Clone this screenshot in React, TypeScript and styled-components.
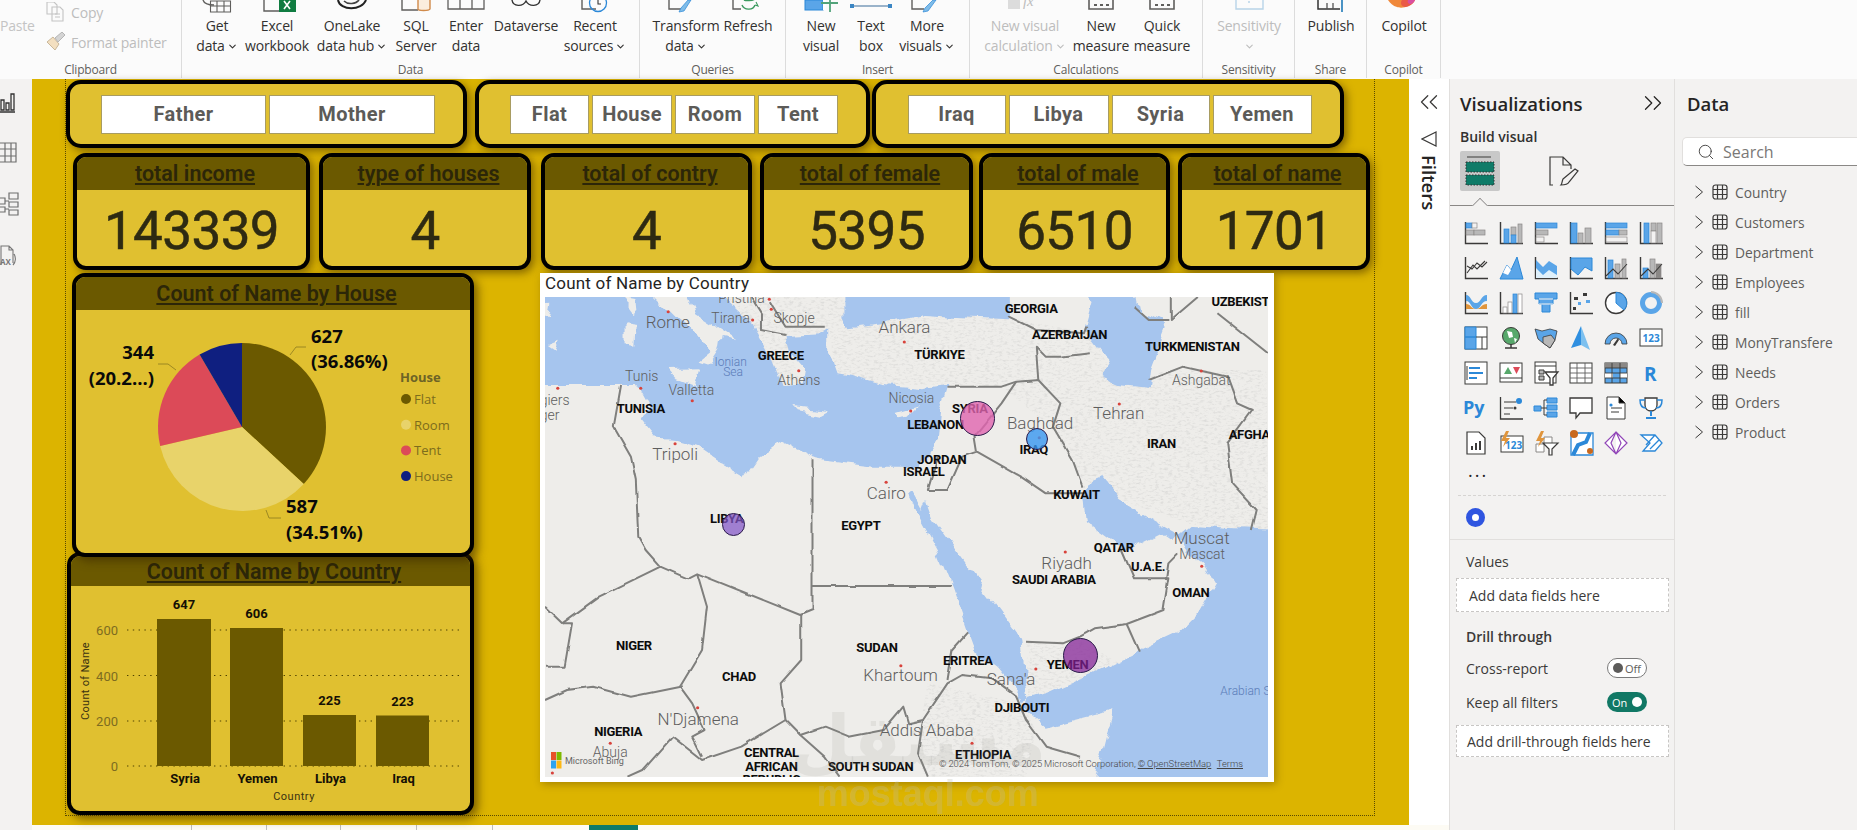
import React, { FC, ReactNode } from 'react';
import styled, { createGlobalStyle } from 'styled-components';
import { ChevronDown, ChevronsLeft, ChevronsRight, Search } from 'lucide-react';

const UI = '"Open Sans", "Noto Sans", sans-serif';
const DIN = 'Roboto, "Liberation Sans", sans-serif';

const GlobalStyle = createGlobalStyle`
  * { box-sizing: border-box; }
  html, body { margin: 0; padding: 0; background: #fff; overflow: hidden; }
  body { font-family: ${UI}; color: #252423; }
`;

/* ---------- ribbon ---------- */

const Ribbon = styled.div`
  display: flex;
  height: 79px;
  background: #fbfbfb;
`;
const Group = styled.div<{ $w: number }>`
  width: ${p => p.$w}px;
  height: 78px;
  display: flex;
  flex-direction: column;
  border-right: 1px solid #dcdcdc;
`;
const GroupItems = styled.div<{ $pad?: number }>`
  display: flex;
  height: 62px;
  flex: none;
  padding-left: ${p => p.$pad ?? 0}px;
`;
const GroupLabel = styled.div`
  height: 16px;
  line-height: 16px;
  text-align: center;
  font-size: 12px;
  letter-spacing: -0.2px;
  color: #605e5c;
`;
const RibbonBtn = styled.div<{ $w: number; $off?: boolean }>`
  width: ${p => p.$w}px;
  flex: none;
  display: flex;
  flex-direction: column;
  align-items: center;
  font-size: 14px;
  letter-spacing: -0.15px;
  line-height: 20px;
  white-space: nowrap;
  color: ${p => (p.$off ? '#bdbdbd' : '#323130')};
`;
const IconSlot = styled.div`
  height: 16px;
  width: 44px;
  flex: none;
  svg { display: block; }
`;
const Line = styled.div`
  display: flex;
  align-items: center;
  height: 20px;
  gap: 2px;
`;
const ClipPaste = styled.div`
  width: 46px;
  padding-top: 16px;
  font-size: 14px;
  line-height: 20px;
  letter-spacing: -0.2px;
  color: #c4c4c4;
`;
const ClipRows = styled.div`
  display: flex;
  flex-direction: column;
  gap: 10px;
  padding-top: 2px;
`;
const ClipRow = styled.div`
  display: flex;
  align-items: center;
  gap: 5px;
  height: 20px;
  font-size: 14px;
  letter-spacing: -0.15px;
  color: #bdbdbd;
`;

const Ico: FC<{ children: ReactNode }> = ({ children }) => (
  <IconSlot>
    <svg width="44" height="16" viewBox="0 0 44 16" fill="none">{children}</svg>
  </IconSlot>
);

const Btn: FC<{ w: number; icon?: ReactNode; a: string; b?: string; chev?: boolean; off?: boolean }> = ({ w, icon, a, b, chev, off }) => (
  <RibbonBtn $w={w} $off={off}>
    <Ico>{icon}</Ico>
    <Line>{a}</Line>
    <Line>{b}{chev && <ChevronDown size={11} strokeWidth={2.4} />}</Line>
  </RibbonBtn>
);

const GR = '#5f5e5c';
function FxText({ x, y, children }: { x: string; y: string; children: string }) {
  return <text x={x} y={y} fontFamily='"Liberation Serif", serif' fontStyle="italic" fontSize="15" fill="#bdbdbd">{children}</text>;
}
const ribbonIcons = {
  getData: <g>
    <path d="M8 0c1 3 4 5 11 5" stroke={GR} strokeWidth="1.4" />
    <path d="M15.5 1h20v11h-20zM22 1v11M29 1v11M15.5 6h20" stroke={GR} strokeWidth="1.1" /></g>,
  excel: <g>
    <path d="M9 0v11h15" stroke={GR} strokeWidth="1.4" />
    <rect x="24" y="0" width="17" height="12" fill="#107c41" />
    <path d="M29 1l6 8M35 1l-6 8" stroke="#fff" strokeWidth="1.6" /></g>,
  onelake: <g>
    <path d="M8 0c2 11 24 11 28 0" stroke="#222" strokeWidth="2" />
    <path d="M14 1c4 4 12 3 15-1" stroke="#444" strokeWidth="1.6" /></g>,
  sql: <g>
    <path d="M8 0v10h16" stroke={GR} strokeWidth="1.4" />
    <path d="M24 0v9c0 2 11 2 12 0V0" stroke="#d08a4a" strokeWidth="1.4" fill="#fbeede" /></g>,
  table: <g>
    <path d="M4 0v9h36V0M16 0v9M28 0v9" stroke={GR} strokeWidth="1.3" /></g>,
  dataverse: <g>
    <path d="M8 0c1 7 11 7 14 1c3 6 13 6 14-1" stroke="#333" strokeWidth="1.4" /></g>,
  recent: <g>
    <path d="M9 0v9h14" stroke={GR} strokeWidth="1.4" />
    <circle cx="25" cy="3" r="8.5" stroke="#2b88d8" strokeWidth="1.3" />
    <path d="M25 0v4h3" stroke="#333" strokeWidth="1.1" /></g>,
  transform: <g>
    <path d="M5 0v9h12" stroke={GR} strokeWidth="1.4" />
    <path d="M24 0l-7 8-2 4 5-1 7-11z" fill="#7fbce8" stroke="#2b88d8" strokeWidth=".7" /></g>,
  refresh: <g>
    <path d="M7 0v9h8" stroke={GR} strokeWidth="1.4" />
    <path d="M16 5c2 5 11 6 13 0M18 0c2 1 8 1 11-1" stroke="#3c9a5f" strokeWidth="1.4" />
    <path d="M29 5l3 1-2-4" stroke="#3c9a5f" strokeWidth="1.1" /></g>,
  newVisual: <g>
    <rect x="6" y="0" width="18" height="10" fill="#5aa5e8" stroke="#2b88d8" />
    <rect x="24" y="0" width="3" height="10" fill="#fff" />
    <path d="M22 3h17M31 0v12" stroke="#52a37a" strokeWidth="1.8" /></g>,
  textBox: <g>
    <path d="M3 6h38" stroke="#3b6d99" strokeWidth="1.1" />
    <rect x="1" y="4" width="4" height="4" fill="#3b86c4" />
    <rect x="39" y="4" width="4" height="4" fill="#3b86c4" /></g>,
  moreVisuals: <g>
    <path d="M7 0v9h12" stroke={GR} strokeWidth="1.4" />
    <path d="M28 0l-8 8-2 4 5-1 8-11z" fill="#7fbce8" stroke="#2b88d8" strokeWidth=".7" /></g>,
  calcOff: <g>
    <rect x="5" y="0" width="12" height="9" fill="#dcdcdc" />
    <FxText x="20" y="6">fx</FxText></g>,
  measure: <g>
    <path d="M10 0v9h24V0" stroke={GR} strokeWidth="1.6" />
    <path d="M15 4h3v2h-3zM21 4h3v2h-3zM27 4h3v2h-3z" fill={GR} /></g>,
  sens: <g>
    <path d="M9 0v9h27V0" stroke="#b8d4e8" strokeWidth="1.4" />
    <circle cx="22" cy="2" r="1" fill="#b8d4e8" /></g>,
  publish: <g>
    <path d="M9 0v9h22" stroke="#333" strokeWidth="1.5" />
    <path d="M18 3v6M24 3v6" stroke="#555" strokeWidth="1.3" />
    <path d="M33 0v12" stroke="#1f7ab8" strokeWidth="1.6" /></g>,
  copilot: <g>
    <path d="M6 0c2 3 5 6 9 7c2 1 8 1 11-1c3-1 6-3 7-6z" fill="#f0883a" />
    <path d="M20 0c-2 3-1 6 3 7c4 0 8-3 10-7z" fill="#ea5a47" />
    <path d="M26 0c-1 2 0 4 3 4c2-1 3-2 4-4z" fill="#d94fa0" /></g>,
};

const RibbonBar: FC = () => (
  <Ribbon>
    <Group $w={182}>
      <GroupItems>
        <ClipPaste>Paste</ClipPaste>
        <ClipRows>
          <ClipRow>
            <svg width="20" height="20" viewBox="0 0 20 20" fill="none" stroke="#c4c4c4" strokeWidth="1.1">
              <path d="M1 0h7l3 3v9H1zM6 5h8l3 3v11H6z" fill="#fbfbfb" /><path d="M9 12h5M9 15h5" />
            </svg>
            Copy
          </ClipRow>
          <ClipRow>
            <svg width="20" height="20" viewBox="0 0 20 20" fill="none">
              <path d="M1 10l6-5 6 7-4 6z" fill="#f3dfc0" stroke="#c9b79a" />
              <path d="M9 6l7-6 3 3-7 7z" fill="#d4d4d4" stroke="#b5b5b5" />
            </svg>
            Format painter
          </ClipRow>
        </ClipRows>
      </GroupItems>
      <GroupLabel>Clipboard</GroupLabel>
    </Group>
    <Group $w={458}>
      <GroupItems $pad={9}>
        <Btn w={52} a="Get" b="data" chev icon={ribbonIcons.getData} />
        <Btn w={68} a="Excel" b="workbook" icon={ribbonIcons.excel} />
        <Btn w={82} a="OneLake" b="data hub" chev icon={ribbonIcons.onelake} />
        <Btn w={46} a="SQL" b="Server" icon={ribbonIcons.sql} />
        <Btn w={54} a="Enter" b="data" icon={ribbonIcons.table} />
        <Btn w={66} a="Dataverse" icon={ribbonIcons.dataverse} />
        <Btn w={72} a="Recent" b="sources" chev icon={ribbonIcons.recent} />
      </GroupItems>
      <GroupLabel>Data</GroupLabel>
    </Group>
    <Group $w={146}>
      <GroupItems $pad={14}>
        <Btn w={64} a="Transform" b="data" chev icon={ribbonIcons.transform} />
        <Btn w={60} a="Refresh" icon={ribbonIcons.refresh} />
      </GroupItems>
      <GroupLabel>Queries</GroupLabel>
    </Group>
    <Group $w={184}>
      <GroupItems $pad={10}>
        <Btn w={50} a="New" b="visual" icon={ribbonIcons.newVisual} />
        <Btn w={50} a="Text" b="box" icon={ribbonIcons.textBox} />
        <Btn w={62} a="More" b="visuals" chev icon={ribbonIcons.moreVisuals} />
      </GroupItems>
      <GroupLabel>Insert</GroupLabel>
    </Group>
    <Group $w={233}>
      <GroupItems $pad={11}>
        <Btn w={88} off a="New visual" b="calculation" chev icon={ribbonIcons.calcOff} />
        <Btn w={64} a="New" b="measure" icon={ribbonIcons.measure} />
        <Btn w={58} a="Quick" b="measure" icon={ribbonIcons.measure} />
      </GroupItems>
      <GroupLabel>Calculations</GroupLabel>
    </Group>
    <Group $w={92}>
      <GroupItems>
        <Btn w={92} off a="Sensitivity" chev icon={ribbonIcons.sens} />
      </GroupItems>
      <GroupLabel>Sensitivity</GroupLabel>
    </Group>
    <Group $w={72}>
      <GroupItems>
        <Btn w={72} a="Publish" icon={ribbonIcons.publish} />
      </GroupItems>
      <GroupLabel>Share</GroupLabel>
    </Group>
    <Group $w={74}>
      <GroupItems>
        <Btn w={74} a="Copilot" icon={ribbonIcons.copilot} />
      </GroupItems>
      <GroupLabel>Copilot</GroupLabel>
    </Group>
  </Ribbon>
);

/* ---------- page frame ---------- */

const Page = styled.div`
  position: relative;
  width: 1857px;
  height: 830px;
  overflow: hidden;
`;
const Body = styled.div`
  display: flex;
  height: 751px;
`;
const Rail = styled.div`
  width: 32px;
  flex: none;
  background: #f3f2f1;
  display: flex;
  flex-direction: column;
  padding-top: 11px;
  gap: 28px;
  svg { display: block; }
`;
const WorkColumn = styled.div`
  width: 1417px;
  flex: none;
  display: flex;
  flex-direction: column;
`;
const WorkRow = styled.div`
  display: flex;
  height: 746px;
`;
const Canvas = styled.div`
  width: 1377px;
  flex: none;
  background: #dcb400;
  padding-left: 33px;
`;
const Frame = styled.div`
  width: 1310px;
  height: 737px;
  border: 1px dotted #5a4a00;
  border-top: none;
  padding-top: 1px;
`;
const TabStrip = styled.div`
  display: flex;
  height: 5px;
  background: #fdfbf4;
`;
const Tab = styled.div<{ $w: number; $active?: boolean; $plain?: boolean }>`
  width: ${p => p.$w}px;
  background: ${p => (p.$active ? '#0f7b68' : 'transparent')};
  border-right: ${p => (p.$active || p.$plain ? 'none' : '1px solid #bdbdbd')};
`;

/* ---------- cards ---------- */

const SlicerRow = styled.div`
  display: flex;
`;
const SlicerCard = styled.div<{ $w: number; $ml: number }>`
  width: ${p => p.$w}px;
  margin-left: ${p => p.$ml}px;
  height: 68px;
  background: #e0c030;
  border: 4px solid #000;
  border-radius: 15px;
  box-shadow: 3px 3px 9px rgba(60, 40, 0, .55);
  display: flex;
  align-items: center;
  justify-content: center;
  padding-left: 3px;
  gap: 3px;
`;
const SlicerBtn = styled.div<{ $w: number }>`
  width: ${p => p.$w}px;
  height: 39px;
  background: #fff;
  border: 1px solid #a89c62;
  display: flex;
  align-items: center;
  justify-content: center;
  font: 700 20px ${DIN};
  letter-spacing: .4px;
  color: #5c5b58;
`;
const KpiRow = styled.div`
  display: flex;
  margin-top: 5px;
`;
const KpiCard = styled.div<{ $w: number; $ml: number }>`
  width: ${p => p.$w}px;
  margin-left: ${p => p.$ml}px;
  height: 117px;
  background: #e0c030;
  border: 4px solid #000;
  border-radius: 13px;
  box-shadow: 3px 3px 9px rgba(60, 40, 0, .55);
  overflow: hidden;
  display: flex;
  flex-direction: column;
`;
const CardHead = styled.div<{ $h: number; $size: number }>`
  height: ${p => p.$h}px;
  flex: none;
  padding-left: 7px;
  background: #6b5900;
  display: flex;
  align-items: center;
  justify-content: center;
  font: 600 ${p => p.$size}px ${DIN};
  color: #2c2608;
  text-decoration: underline;
  text-underline-offset: 2px;
  text-decoration-thickness: 2px;
`;
const KpiValue = styled.div`
  flex: 1;
  display: flex;
  align-items: center;
  justify-content: center;
  padding-top: 6px;
  font: 400 53px ${DIN};
  letter-spacing: -.6px;
  -webkit-text-stroke: .5px #2e2a12;
  color: #2e2a12;
`;
const MainRow = styled.div`
  display: flex;
  margin-top: 3px;
`;
const LeftColumn = styled.div`
  width: 408px;
  flex: none;
  display: flex;
  flex-direction: column;
`;
const ChartCard = styled.div<{ $w: number; $h: number; $ml: number; $mt?: number; $top?: boolean }>`
  position: relative;
  z-index: ${p => (p.$top ? 2 : 1)};
  width: ${p => p.$w}px;
  height: ${p => p.$h}px;
  margin-left: ${p => p.$ml}px;
  margin-top: ${p => p.$mt ?? 0}px;
  background: #e0c030;
  border: 4px solid #000;
  border-radius: 13px;
  box-shadow: 4px 4px 10px rgba(60, 40, 0, .6);
  overflow: hidden;
  display: flex;
  flex-direction: column;
  svg { display: block; }
`;
const MapFrame = styled.div`
  width: 734px;
  height: 509px;
  margin-left: 66px;
  background: #fff;
  box-shadow: 2px 2px 8px rgba(60, 40, 0, .35);
  padding: 0 6px 5px 5px;
`;
const MapTitle = styled.div`
  height: 24px;
  font: 400 17px/21px ${DIN};
  color: #252423;
  letter-spacing: .2px;
`;
const MapView = styled.div`
  position: relative;
  width: 723px;
  height: 480px;
  overflow: hidden;
  background: #eeedea;
  svg { display: block; }
`;
const MapLabel = styled.span<{ $kind: 'country' | 'city' | 'small' | 'sea'; $start?: boolean }>`
  position: absolute;
  white-space: nowrap;
  transform: ${p => (p.$start ? 'translateY(-50%)' : 'translate(-50%, -50%)')};
  font-family: ${DIN};
  font-size: ${p => ({ country: 13, city: 17, small: 14, sea: 12 }[p.$kind])}px;
  font-weight: ${p => (p.$kind === 'country' ? 700 : 300)};
  letter-spacing: ${p => (p.$kind === 'country' ? '-.3px' : '0')};
  color: ${p => ({ country: '#0c0c0c', city: '#5e5e5e', small: '#5e5e5e', sea: '#5b7cb8' }[p.$kind])};
`;
const Bubble = styled.span<{ $color: string; $r: number }>`
  position: absolute;
  width: ${p => p.$r * 2}px;
  height: ${p => p.$r * 2}px;
  margin: -${p => p.$r}px 0 0 -${p => p.$r}px;
  border-radius: 50%;
  background: ${p => p.$color};
  border: 1px solid #2a1a4a;
`;
const Attribution = styled.span`
  position: absolute;
  right: 25px;
  bottom: 8px;
  font: 300 9.4px ${DIN};
  color: #444;
  white-space: nowrap;
  word-spacing: -.4px;
`;
const BingMark = styled.span`
  position: absolute;
  left: 6px;
  bottom: 8px;
  display: flex;
  align-items: center;
  gap: 3px;
  font: 400 9px ${DIN};
  color: #666;
  svg { display: block; }
`;
const Watermark = styled.div`
  position: absolute;
  left: 810px;
  top: 700px;
  width: 236px;
  text-align: center;
  pointer-events: none;
`;
const WatermarkLogo = styled.div`
  font: 700 70px/82px "DejaVu Sans", sans-serif;
  color: rgba(140, 140, 130, .13);
`;
const WatermarkText = styled.div`
  font: 700 36px/28px "Liberation Sans", sans-serif;
  margin-top: -2px;
  color: rgba(190, 190, 170, .3);
`;

/* ---------- pie and bars ---------- */

const pieData = [
  { name: 'Flat', share: 36.86, color: '#6b5900' },
  { name: 'Room', share: 34.51, color: '#e8d36a' },
  { name: 'Tent', share: 20.21, color: '#dc4a58' },
  { name: 'House', share: 8.42, color: '#0f1f80' },
];

const slices = (cx: number, cy: number, r: number) => {
  let start = 0;
  return pieData.map(d => {
    const end = start + (d.share / 100) * Math.PI * 2;
    const p = (a: number) => `${cx + r * Math.sin(a)} ${cy - r * Math.cos(a)}`;
    const path = `M${cx} ${cy}L${p(start)}A${r} ${r} 0 ${end - start > Math.PI ? 1 : 0} 1 ${p(end)}Z`;
    start = end;
    return { ...d, path };
  });
};

const PieChart: FC = () => (
  <svg width="394" height="243" viewBox="76 310 394 243">
    {slices(242, 427, 84).map(s => <path key={s.name} d={s.path} fill={s.color} />)}
    <g stroke="#8b7a20" strokeWidth=".8" fill="none">
      <path d="M290 355l6-8h10M158 364h10l8 6M266 510l3 8h12" />
    </g>
    <g fontFamily={UI} fontWeight="700" fontSize="18.5" fill="#0a0a0a">
      <text x="311" y="343">627</text>
      <text x="311" y="368">(36.86%)</text>
      <text x="154" y="359" textAnchor="end">344</text>
      <text x="154" y="385" textAnchor="end">(20.2...)</text>
      <text x="286" y="513">587</text>
      <text x="286" y="539">(34.51%)</text>
    </g>
    <text x="400" y="382" fontFamily={UI} fontWeight="700" fontSize="13" fill="#6d6326">House</text>
    {pieData.map((d, i) => (
      <g key={d.name}>
        <circle cx="406" cy={399 + i * 25.7} r="5" fill={d.color} />
        <text x="414" y={404 + i * 25.7} fontFamily={UI} fontSize="13" fill="#7d6c1c">{d.name}</text>
      </g>
    ))}
  </svg>
);

const barData = [
  { name: 'Syria', value: 647, x: 157, w: 54, top: 619 },
  { name: 'Yemen', value: 606, x: 230, w: 53, top: 628 },
  { name: 'Libya', value: 225, x: 303, w: 53, top: 715 },
  { name: 'Iraq', value: 223, x: 376, w: 53, top: 715.5 },
];

const BarChart: FC = () => (
  <svg width="399" height="225" viewBox="71 586 399 225">
    {[[600, 630], [400, 675.5], [200, 721], [0, 766]].map(([t, y]) => (
      <g key={t}>
        <line x1="127" x2="461" y1={y} y2={y} stroke="#4f4200" strokeWidth="1.2" strokeDasharray="1.4 4.4" />
        <text x="118" y={y + 5} textAnchor="end" fontFamily={DIN} fontSize="13" fill="#7d6c20">{t}</text>
      </g>
    ))}
    {barData.map(b => (
      <g key={b.name}>
        <rect x={b.x} y={b.top} width={b.w} height={766 - b.top} fill="#6b5900" />
        <text x={b.x + b.w / 2} y={b.top - 10} textAnchor="middle" fontFamily={DIN} fontWeight="700" fontSize="13" fill="#141005">{b.value}</text>
        <text x={b.x + b.w / 2 + 1} y="783" textAnchor="middle" fontFamily={DIN} fontWeight="700" fontSize="13" fill="#141005">{b.name}</text>
      </g>
    ))}
    <text x="294" y="800" textAnchor="middle" fontFamily={DIN} fontSize="11" letterSpacing=".5" fill="#3a3210">Country</text>
    <text transform="translate(89 681) rotate(-90)" textAnchor="middle" fontFamily={DIN} fontSize="11" letterSpacing=".3" fill="#3a3210">Count of Name</text>
  </svg>
);

/* ---------- map: coordinates are x*2.036, y*3 of the 723x480 view, with the origin at (30, 81) ---------- */

const WATER = '#a6c5ee';
const LAND = '#eeedea';
const waterShapes = [
  'M10 60L380 60L445 150L465 200L490 270L510 345L555 340L560 300L530 250L522 195L590 190L605 175L605 250L620 310L660 320L720 345L800 355L850 345L835 420L830 510L795 590L700 590L600 572L575 565L510 520L470 560L440 625L400 590L340 530L290 510L255 505L225 450L240 410L215 345L185 345L100 345L10 345Z',
  'M640 60L975 60L975 145L900 140L800 132L720 158L650 172L640 145Z',
  'M1125 60L1225 60L1235 130L1290 150L1300 165L1265 300L1260 355L1200 345L1160 320L1180 270L1135 180L1150 100Z',
  'M770 670L800 760L830 840L860 950L890 1080L905 1140L950 1190L1000 1280L1005 1310L1015 1290L1010 1240L1000 1110L940 990L880 870L825 760L808 690L800 720L778 660Z',
  'M1135 640L1165 620L1200 690L1270 750L1320 790L1310 810L1290 790L1235 830L1205 840L1130 760L1125 680Z',
  'M1530 780L1440 775L1350 765L1320 800L1340 850L1370 880L1395 940L1360 1030L1320 1090L1240 1145L1150 1210L1060 1270L1015 1290L1010 1320L1050 1370L1190 1320L1175 1400L1150 1545L1530 1545Z',
];
const landShapes = [
  'M240 60L320 60L340 130L420 205L390 195L385 240L365 285L345 275L370 245L345 195L300 150Z',
  'M285 300L345 298L335 345L300 325Z',
  'M190 85L210 90L212 120L200 135L190 115Z',
  'M188 160L213 165L210 230L188 225Z',
  'M10 100L45 95L40 140L10 140Z',
  'M40 225L62 212L55 240Z',
  'M540 408L605 420L590 432L545 418Z',
  'M750 432L790 415L775 440L755 445Z',
];
const borders = [
  'M185 345L170 470L205 560L215 630L220 800L235 840L265 890L140 980L65 1060L30 1010',
  'M265 890L320 925L340 910L550 1035L575 1020L575 565',
  'M340 910L360 1010L350 1140L305 1250L330 1300L355 1380L330 1400L350 1460',
  'M30 1190L70 1190L85 1060L65 1060',
  'M30 1290L75 1260L130 1250L205 1280L305 1250',
  'M552 1035L552 1170L510 1240L520 1350L550 1395L600 1370L650 1400L720 1380L760 1310L770 1360L800 1350L850 1240L880 1215L940 1225L990 1280L1010 1350L1050 1430L1120 1460',
  'M575 948L860 948',
  'M850 1230L860 1140L890 1090',
  'M520 1350L430 1430L350 1470L290 1400L230 1500L200 1520',
  'M550 1395L600 1460L630 1520M800 1350L790 1450L810 1520',
  'M1010 1115L1085 1120L1120 1100L1150 1075L1215 1062L1290 1020L1300 925L1230 925L1205 840',
  'M1215 1062L1240 1145',
  'M1295 930L1300 880L1320 850',
  'M850 350L960 350L990 335L1035 330L1080 400L1065 470L1105 570L1125 650',
  'M990 335L960 400L905 500L910 545L880 560L850 660L810 660L830 560',
  'M910 545L1000 620L1050 670L1130 670',
  'M1035 330L1030 230L1050 260L1080 260L1140 250',
  'M975 140L1030 180L1130 190L1135 170',
  'M1260 330L1330 290L1420 320L1440 400L1470 420L1420 520L1430 640L1480 720L1470 780',
  'M1305 81L1305 150L1360 81M1400 130L1503 250M1230 110L1260 150L1300 150',
  'M450 81L470 130L470 180L520 195M490 100L520 170L600 170',
];
const reliefShapes = [
  'M610 180L720 150L800 125L900 135L1000 150L1140 190L1200 345L1300 300L1500 300L1503 780L1350 765L1200 690L1120 620L1060 470L960 350L850 345L720 345L620 310Z',
  'M385 81L640 81L640 160L590 190L520 195L550 340L510 345L465 200Z',
  'M810 1240L1000 1300L1030 1380L1010 1520L800 1520L790 1400Z',
  'M240 81L340 130L385 240L345 195Z',
  'M1010 1120L1120 1110L1200 1180L1060 1270L1015 1290Z',
];

type Kind = 'country' | 'city' | 'small' | 'sea';
const labels: [string, number, number, Kind, boolean?][] = [
  ['GEORGIA', 1020, 115, 'country'], ['AZERBAIJAN', 1098, 192, 'country'], ['UZBEKISTAN', 1387, 93, 'country', true],
  ['TURKMENISTAN', 1348, 229, 'country'], ['GREECE', 510, 255, 'country'], ['TÜRKIYE', 833, 253, 'country'],
  ['TUNISIA', 225, 413, 'country'], ['SYRIA', 895, 413, 'country'], ['LEBANON', 825, 462, 'country'], ['IRAQ', 1025, 537, 'country'],
  ['JORDAN', 838, 567, 'country'], ['ISRAEL', 801, 604, 'country'], ['KUWAIT', 1112, 672, 'country'], ['IRAN', 1285, 518, 'country'],
  ['AFGHANISTAN', 1422, 493, 'country', true], ['EGYPT', 673, 764, 'country'], ['LIBYA', 400, 745, 'country'], ['QATAR', 1188, 831, 'country'],
  ['SAUDI ARABIA', 1066, 928, 'country'], ['U.A.E.', 1258, 888, 'country'], ['OMAN', 1345, 965, 'country'], ['NIGER', 211, 1125, 'country'],
  ['CHAD', 425, 1218, 'country'], ['SUDAN', 706, 1132, 'country'], ['ERITREA', 891, 1170, 'country'], ['YEMEN', 1094, 1181, 'country'],
  ['DJIBOUTI', 1001, 1311, 'country'], ['NIGERIA', 179, 1383, 'country'], ['ETHIOPIA', 922, 1451, 'country'], ['CENTRAL', 491, 1447, 'country'],
  ['AFRICAN', 491, 1489, 'country'], ['REPUBLIC', 491, 1528, 'country'], ['SOUTH SUDAN', 693, 1489, 'country'],
  ['Pristina', 430, 85, 'small'], ['Rome', 280, 155, 'city'], ['Tirana', 408, 143, 'small'], ['Skopje', 537, 143, 'small'], ['Ankara', 762, 170, 'city'],
  ['Athens', 547, 330, 'small'], ['Tunis', 227, 318, 'small'], ['Valletta', 328, 360, 'small'], ['Nicosia', 776, 383, 'small'],
  ['Algiers', -5, 390, 'small', true], ['Alger', -5, 436, 'small', true], ['Tripoli', 295, 552, 'city'], ['Baghdad', 1038, 459, 'city'], ['Tehran', 1198, 430, 'city'],
  ['Ashgabat', 1366, 330, 'small'], ['Cairo', 725, 670, 'city'], ['Muscat', 1367, 803, 'city'], ['Mascat', 1368, 851, 'small'], ['Riyadh', 1092, 878, 'city'],
  ['Khartoum', 754, 1216, 'city'], ["Sana'a", 979, 1227, 'city'], ["N'Djamena", 342, 1346, 'city'], ['Addis Ababa', 807, 1379, 'city'], ['Abuja', 163, 1447, 'small'],
  ['Ionian', 408, 277, 'sea'], ['Sea', 413, 307, 'sea'], ['Arabian Sea', 1405, 1263, 'sea', true],
];
const cityDots = [[281, 125], [487, 88], [453, 150], [491, 118], [762, 216], [547, 302], [225, 355], [330, 392], [56, 355], [775, 423], [295, 521], [1037, 503], [1200, 402], [1367, 303], [725, 637], [1090, 846], [1368, 889], [755, 1187], [1030, 1197], [341, 1313], [900, 1420], [163, 1420], [45, 1509]];
const bubbles = [
  { x: 910, y: 445, r: 17.5, color: 'rgba(224, 100, 175, .8)' },
  { x: 1031, y: 507, r: 11, color: 'rgba(55, 150, 240, .8)' },
  { x: 414, y: 762, r: 11.5, color: 'rgba(130, 85, 200, .72)' },
  { x: 1120, y: 1156, r: 17.5, color: 'rgba(130, 30, 150, .72)' },
];
const mx = (x: number) => (x - 30) / 2.036;
const my = (y: number) => (y - 81) / 3;

const MapChart: FC = () => (
  <MapView>
    <svg width="723" height="480" viewBox="30 81 1473 1440" preserveAspectRatio="none">
      <defs>
        <filter id="relief" filterUnits="userSpaceOnUse" x="0" y="0" width="1600" height="1600">
          <feTurbulence type="fractalNoise" baseFrequency=".11 .16" numOctaves="3" seed="4" />
          <feColorMatrix values="0 0 0 0 .58  0 0 0 0 .58  0 0 0 0 .57  3 0 0 0 -1.45" />
          <feComposite in2="SourceAlpha" operator="in" />
        </filter>
        <filter id="coast" filterUnits="userSpaceOnUse" x="0" y="0" width="1600" height="1600">
          <feTurbulence type="fractalNoise" baseFrequency=".018 .012" numOctaves="4" seed="9" result="n" />
          <feDisplacementMap in="SourceGraphic" in2="n" scale="34" xChannelSelector="R" yChannelSelector="G" />
        </filter>
        <filter id="wiggle" filterUnits="userSpaceOnUse" x="0" y="0" width="1600" height="1600">
          <feTurbulence type="fractalNoise" baseFrequency=".025 .018" numOctaves="2" seed="2" result="n" />
          <feDisplacementMap in="SourceGraphic" in2="n" scale="8" xChannelSelector="R" yChannelSelector="G" />
        </filter>
      </defs>
      <rect x="30" y="81" width="1473" height="1440" fill={LAND} />
      <g filter="url(#relief)" opacity=".42">
        {reliefShapes.map(d => <path key={d} d={d} fill="#000" />)}
      </g>
      <g filter="url(#coast)">
        {waterShapes.map(d => <path key={d} d={d} fill={WATER} />)}
        {landShapes.map(d => <path key={d} d={d} fill={LAND} />)}
      </g>
      <g fill="none" stroke="#7f7f7d" strokeWidth="2" strokeLinejoin="round" filter="url(#wiggle)">
        {borders.map(d => <path key={d} d={d} vectorEffect="non-scaling-stroke" />)}
      </g>
      {cityDots.map(([x, y]) => <ellipse key={`${x}-${y}`} cx={x} cy={y} rx="3.2" ry="4.6" fill="#d8433c" />)}
    </svg>
    {labels.map(([text, x, y, kind, start]) => (
      <MapLabel key={text} $kind={kind} $start={start} style={{ left: mx(x), top: my(y) }}>{text}</MapLabel>
    ))}
    {bubbles.map(b => <Bubble key={b.x} $color={b.color} $r={b.r} style={{ left: mx(b.x), top: my(b.y) }} />)}
    <BingMark>
      <svg width="11" height="17" viewBox="0 0 11 17">
        <rect x="0" y="0" width="5" height="8" fill="#e8512a" /><rect x="5.5" y="0" width="5" height="8" fill="#7eb900" />
        <rect x="0" y="8.5" width="5" height="8" fill="#2fa3ee" /><rect x="5.5" y="8.5" width="5" height="8" fill="#fdb813" />
      </svg>
      Microsoft Bing
    </BingMark>
    <Attribution>© 2024 TomTom, © 2025 Microsoft Corporation, <u>© OpenStreetMap</u> &nbsp; <u>Terms</u></Attribution>
  </MapView>
);

/* ---------- filters pane ---------- */

const FiltersPane = styled.div`
  width: 40px;
  flex: none;
  background: #fff;
  display: flex;
  flex-direction: column;
  align-items: center;
  padding-top: 8px;
  color: #3b3a39;
  svg { display: block; }
`;
const FilterGlyph = styled.div`
  margin-top: 14px;
`;
const FiltersText = styled.div`
  margin-top: 8px;
  writing-mode: vertical-rl;
  font-size: 18.5px;
  font-weight: 600;
  color: #252423;
  line-height: 22px;
`;

/* ---------- visualizations pane ---------- */

const VizPane = styled.div`
  width: 226px;
  flex: none;
  background: #f3f2f1;
  border-left: 1px solid #e1dfdd;
  border-right: 1px solid #e1dfdd;
  height: 751px;
`;
const PaneTitle = styled.div<{ $pl: number }>`
  height: 50px;
  padding: 0 6px 2px ${p => p.$pl}px;
  display: flex;
  align-items: center;
  justify-content: space-between;
  font-size: 18.5px;
  font-weight: 600;
  color: #252423;
`;
const BuildLabel = styled.div`
  height: 16px;
  line-height: 16px;
  padding-left: 10px;
  font-size: 14px;
  font-weight: 600;
  color: #323130;
`;
const BuildTabs = styled.div`
  position: relative;
  height: 61px;
  padding: 6px 0 0 10px;
  display: flex;
  gap: 44px;
  border-bottom: 1px solid #8a8886;
  svg { display: block; }
`;
const BuildTab = styled.div<{ $on?: boolean }>`
  width: 40px;
  height: 40px;
  border-radius: 2px;
  background: ${p => (p.$on ? '#c8c8c8' : 'transparent')};
  display: flex;
  align-items: center;
  justify-content: center;
`;
const Notch = styled.span`
  position: absolute;
  left: 24px;
  bottom: -1px;
  width: 12px;
  height: 12px;
  border-left: 1px solid #8a8886;
  border-top: 1px solid #8a8886;
  background: #f3f2f1;
  transform: translateY(6px) rotate(45deg);
  clip-path: polygon(0 0, 100% 0, 0 100%);
`;
const IconGrid = styled.div`
  display: grid;
  grid-template-columns: repeat(6, 35px);
  grid-auto-rows: 35px;
  padding: 9px 0 0 8px;
`;
const IconCell = styled.div`
  display: flex;
  align-items: center;
  justify-content: center;
  svg { display: block; }
`;
const More = styled.div`
  height: 36px;
  margin: 0 8px;
  padding: 4px 0 0 10px;
  font-size: 18px;
  line-height: 12px;
  letter-spacing: 2px;
  border-bottom: 1px dashed #d6d4d2;
`;
const CopilotRow = styled.div`
  height: 44px;
  padding-left: 16px;
  display: flex;
  align-items: center;
  border-bottom: 1px solid #e1dfdd;
`;
const CopilotDot = styled.span`
  width: 19px;
  height: 19px;
  border-radius: 50%;
  border: 6px solid #2f55e0;
  background: #fff;
`;
const FieldLabel = styled.div<{ $mt: number; $strong?: boolean }>`
  height: 20px;
  margin-top: ${p => p.$mt}px;
  padding-left: 16px;
  line-height: 20px;
  font-size: 14px;
  font-weight: ${p => (p.$strong ? 600 : 400)};
  color: #3b3a39;
`;
const DropBox = styled.div<{ $h: number; $mt: number; $pl: number }>`
  height: ${p => p.$h}px;
  margin: ${p => p.$mt}px 6px 0 6px;
  width: 213px;
  padding-left: ${p => p.$pl}px;
  display: flex;
  align-items: center;
  background: #fff;
  border: 1px dashed #c8c6c4;
  font-size: 14px;
  color: #3b3a39;
  white-space: nowrap;
`;
const ToggleRow = styled.div<{ $mt: number }>`
  height: 20px;
  margin-top: ${p => p.$mt}px;
  padding: 0 27px 0 16px;
  display: flex;
  align-items: center;
  justify-content: space-between;
  font-size: 14px;
  color: #3b3a39;
`;
const Toggle = styled.div<{ $on?: boolean }>`
  width: 40px;
  height: 20px;
  border-radius: 10px;
  display: flex;
  flex-direction: ${p => (p.$on ? 'row' : 'row-reverse')};
  align-items: center;
  justify-content: space-between;
  padding: 0 5px;
  font-size: 11px;
  background: ${p => (p.$on ? '#117865' : '#fff')};
  border: ${p => (p.$on ? 'none' : '1px solid #7a7a7a')};
  color: ${p => (p.$on ? '#fff' : '#605e5c')};
  i {
    width: 10px;
    height: 10px;
    border-radius: 50%;
    background: ${p => (p.$on ? '#fff' : '#5c5b5a')};
  }
`;

const B = '#5aa5e8';
const DB = '#2b88d8';
const GY = '#b8b8b8';
const K = '#3b3a39';
const Axis = () => <path d="M1.5 1v21.5H24" stroke={K} strokeWidth="1.4" fill="none" />;
const Bars = ({ items }: { items: [number, number, number, number, string][] }) => (
  <>{items.map(([x, y, w, h, c], i) => <rect key={i} x={x} y={y} width={w} height={h} fill={c} stroke={c === B ? DB : '#8a8886'} strokeWidth=".7" />)}</>
);
const VizText = ({ x, y, s, c, children }: { x: number; y: number; s: number; c: string; children: string }) => (
  <text x={x} y={y} fontSize={s} fontWeight="700" fontFamily={UI} fill={c}>{children}</text>
);

const vizIcons: ReactNode[] = [
  <><Axis /><Bars items={[[2, 2, 6, 5, B], [8, 2, 5, 5, '#f3f2f1'], [2, 9, 8, 5, GY], [10, 9, 11, 5, GY]]} /></>,
  <><Axis /><Bars items={[[5, 8, 5, 14, B], [12, 6, 5, 8, GY], [12, 14, 5, 8, B], [19, 3, 4, 19, GY]]} /></>,
  <><path d="M1.5 1v22M1.5 22.5H24" stroke={K} strokeWidth="1.4" /><Bars items={[[2, 2, 21, 5, B], [2, 9, 12, 5, GY], [2, 16, 8, 5, '#f3f2f1']]} /></>,
  <><Axis /><Bars items={[[2, 2, 6, 20, B], [9, 12, 5, 10, GY], [16, 7, 6, 15, GY]]} /></>,
  <><Axis /><Bars items={[[2, 2, 21, 5, B], [2, 9, 13, 5, B], [15, 9, 8, 5, GY], [2, 16, 21, 5, '#f3f2f1']]} /></>,
  <><Axis /><Bars items={[[5, 2, 5, 20, B], [12, 2, 5, 8, GY], [12, 10, 5, 12, '#f3f2f1'], [18, 2, 5, 20, GY]]} /></>,
  <><Axis /><path d="M3 17l6-8 4 4 8-8M3 10l5 3 5-6 5 4 5-5" stroke={K} strokeWidth="1.1" fill="none" /></>,
  <><path d="M1 23L8 9l4 5 6-13 6 22z" fill={B} stroke={DB} /><path d="M8 9l4 5-3 5-5-2z" fill="#fff" /></>,
  <><Axis /><path d="M2 4l7 7 6-6 8 5v12H2z" fill={B} /><path d="M2 12l7 7 6-5 8 5v3H2z" fill="#dff0fb" /></>,
  <><Axis /><path d="M2 2h21v13l-7-4-7 8-7-6z" fill={B} stroke={DB} /></>,
  <><Axis /><Bars items={[[4, 4, 5, 18, B], [11, 8, 5, 14, GY], [18, 3, 4, 19, GY]]} /><path d="M2 20l7-7 5 5 9-10" stroke={K} strokeWidth="1.1" fill="none" /></>,
  <><Axis /><Bars items={[[4, 12, 5, 10, B], [11, 3, 5, 19, GY], [17, 8, 5, 14, '#8a8886']]} /><path d="M2 20l7-7 5 5 9-10" stroke={K} strokeWidth="1.1" fill="none" /></>,
  <><Axis /><path d="M2 4c5 0 5 8 10 8s5-8 11-8v6c-6 0-6 8-11 8S7 10 2 10z" fill={B} /><path d="M2 13c5 0 5 5 10 5s5-5 11-5v5H2z" fill="#e0953c" /></>,
  <><Axis /><Bars items={[[4, 16, 4, 6, '#fff'], [9, 11, 4, 11, '#fff'], [14, 3, 4, 19, B], [19, 3, 4, 19, '#fff']]} /></>,
  <><path d="M1 2h22v6h-4v5h-3v8H8v-8H5V8H1z" fill={B} stroke={DB} /><path d="M5 8h14M5 13h14" stroke="#f3f2f1" strokeWidth="1" /></>,
  <><Axis /><path d="M5 6h4v3H5zM14 2h4v3h-4zM9 11h3v3H9zM17 9h4v3h-4zM4 16h3v3H4z" fill={K} /><path d="M9 11h3v3H9zM17 9h4v3h-4z" fill={B} /></>,
  <><circle cx="12" cy="12" r="10.5" fill="#fff" stroke={K} strokeWidth="1.4" /><path d="M12 12V1.5A10.5 10.5 0 0 1 20 19z" fill={B} stroke={DB} /></>,
  <><circle cx="12" cy="12" r="8.5" fill="none" stroke={B} strokeWidth="5" /><path d="M12 1a11 11 0 0 1 11 11" stroke={GY} strokeWidth="2" fill="none" /></>,
  <><rect x="1" y="1" width="22" height="22" fill="#fff" stroke={K} /><path d="M1 1h11v10H1zM1 11h11v12H1z" fill={B} stroke={DB} /><path d="M12 11h11M18 11v12" stroke={K} /></>,
  <><circle cx="12" cy="10" r="8.5" fill="#57a86b" stroke={K} /><path d="M8 5l5 1 1 5-4 1zM15 12l3 1-2 4z" fill="#fff" /><path d="M6 22h12M12 18v4" stroke={K} strokeWidth="1.5" /></>,
  <><path d="M1 3l7 2 8-2 7 2-2 9-5 8-7-5-5-4z" fill={B} stroke={K} strokeWidth=".8" /><path d="M9 11l8-2 4 5-5 8-7-5z" fill={GY} stroke={K} strokeWidth=".8" /></>,
  <><path d="M12 0L2 22l10-3z" fill="#2f8fe0" /><path d="M12 0l9 24-9-5z" fill="#7cc0ef" /></>,
  <><path d="M1 18a11 11 0 0 1 22 0h-5a6 6 0 0 0-12 0z" fill={B} stroke={K} strokeWidth=".8" /><path d="M9 19l5-7 1 2-4 6z" fill={K} /></>,
  <><rect x="1" y="3" width="22" height="17" fill="#fff" stroke={K} /><VizText x={3.5} y={16} s={10} c={DB}>123</VizText></>,
  <><rect x="1" y="1" width="22" height="22" fill="#fff" stroke={K} /><path d="M5 7h11M5 12h14M5 17h8" stroke={DB} strokeWidth="2" /><path d="M3 5v14" stroke={K} /></>,
  <><rect x="1" y="2" width="22" height="19" fill="#fff" stroke={K} /><path d="M5 13l4-7 4 7z" fill="#57a86b" /><path d="M14 6h7l-3.5 7z" fill="#dc4a58" /><path d="M1 17h22" stroke={K} /></>,
  <><rect x="1" y="1" width="21" height="21" fill="#fff" stroke={K} /><path d="M1 5h21M5 9h5v4H5zM5 15h5v4H5z" stroke={K} fill={GY} /><path d="M11 11h13l-5 6v7h-3v-7z" fill="#fff" stroke={K} strokeWidth="1.3" /></>,
  <><rect x="1" y="2" width="22" height="20" fill="#fff" stroke={K} /><path d="M1 7h22M1 12h22M1 17h22M8 2v20M16 2v20" stroke="#5e5e5e" strokeWidth=".9" /></>,
  <><rect x="1" y="2" width="22" height="20" fill={B} stroke={K} /><path d="M1 2h22v5H1z" fill="#8a8886" /><path d="M1 12h8v5H1zM16 12h7v5h-7z" fill="#fff" /><path d="M1 7h22M1 12h22M1 17h22M8 2v20M16 2v20" stroke={K} strokeWidth=".9" /></>,
  <VizText x={5} y={20} s={19} c={DB}>R</VizText>,
  <VizText x={-1} y={18} s={18} c={DB}>Py</VizText>,
  <><path d="M1.5 1v22H24" stroke={K} strokeWidth="1.3" fill="none" /><path d="M5 6h12M5 12h9M5 18h6" stroke={K} /><circle cx="20" cy="5" r="3" fill={DB} /><circle cx="16" cy="12" r="1.5" fill={K} /></>,
  <><path d="M0 10h7v5H0zM13 2h10v5H13zM13 9h10v5H13zM13 16h10v5H13z" fill={B} stroke={DB} /><path d="M7 12h3M10 4v15M10 4h3M10 12h3M10 19h3" stroke={K} /></>,
  <path d="M1 2h22v15H11l-4 5v-5H1z" fill="#fff" stroke={K} strokeWidth="1.3" />,
  <><path d="M3 1h12l6 6v16H3z" fill="#fff" stroke={K} /><path d="M15 1v6h6M7 12h11M7 16h8" stroke={K} /><circle cx="7" cy="9" r="1.6" fill={DB} /></>,
  <><path d="M6 2h12v7c0 8-12 8-12 0z" fill="#fff" stroke={K} strokeWidth="1.3" /><path d="M6 4H1c0 6 3 8 6 8M18 4h5c0 6-3 8-6 8" fill="none" stroke={DB} strokeWidth="1.5" /><path d="M12 15v5M7 22h10" stroke={DB} strokeWidth="2" /></>,
  <><path d="M3 1h12l6 6v16H3z" fill="#fff" stroke={K} strokeWidth="1.2" /><path d="M7 19v-4h2v4zM11 19v-7h2v7zM15 19v-9h2v9z" fill={K} /></>,
  <><rect x="2" y="5" width="22" height="16" fill="#fff" stroke={K} /><VizText x={6} y={18} s={10} c={DB}>123</VizText><path d="M7 0L2 10h4l-2 6 7-9H7l3-7z" fill="#e0953c" /></>,
  <><path d="M10 6h8v8h-8zM2 13h8v8H2z" fill="#fff" stroke="#8a8886" /><path d="M7 0L2 10h4l-2 6 7-9H7l3-7z" fill="#e0953c" /><path d="M9 12h15l-6 6v6h-3v-6z" fill="#fff" stroke={K} strokeWidth="1.2" /></>,
  <><path d="M2 2h22v22H2z" fill="#fff" stroke={DB} strokeWidth="1.3" /><path d="M4 24l5-10 8-3 4-9" stroke={DB} strokeWidth="4" fill="none" /><circle cx="5" cy="3" r="4" fill="#c8691e" /><circle cx="21" cy="20" r="3" fill="#c8691e" /></>,
  <path d="M12 1l11 11-11 11L1 12zM12 1L7 12l5 11M12 1l5 11-5 11" fill="#fff" stroke="#9146b8" strokeWidth="1.2" />,
  <path d="M2 4h14l7 8-7 8H4l7-8zM7 14L16 4M11 18L20 9" fill="#fff" stroke={DB} strokeWidth="1.3" />,
];

/* ---------- data pane ---------- */

const DataPane = styled.div`
  flex: 1;
  background: #f3f2f1;
  overflow: hidden;
`;
const SearchBox = styled.div`
  width: 200px;
  height: 29px;
  margin: 8px 0 0 7px;
  padding-left: 14px;
  display: flex;
  align-items: center;
  gap: 8px;
  background: #fff;
  border: 1px solid #e1dfdd;
  border-bottom: 1px solid #8a8886;
  border-radius: 5px 0 0 5px;
  font-size: 16px;
  color: #7a7876;
`;
const TableList = styled.div`
  margin-top: 11px;
`;
const TableRow = styled.div`
  height: 30px;
  padding-left: 19px;
  display: flex;
  align-items: center;
  font-size: 13.8px;
  color: #605e5c;
  svg { flex: none; display: block; }
  span { margin-left: 7px; }
`;
const TableGlyph = styled.svg`
  margin-left: 8px;
`;

const slicerCards = [
  { w: 401, ml: 0, items: [['Father', 165], ['Mother', 166]] },
  { w: 395, ml: 8, items: [['Flat', 79], ['House', 80], ['Room', 80], ['Tent', 80]] },
  { w: 472, ml: 2, items: [['Iraq', 98], ['Libya', 100], ['Syria', 98], ['Yemen', 99]] },
] as { w: number; ml: number; items: [string, number][] }[];

const kpis = [
  { title: 'total income', value: '143339', w: 237, ml: 7 },
  { title: 'type of houses', value: '4', w: 212, ml: 9 },
  { title: 'total of contry', value: '4', w: 211, ml: 10 },
  { title: 'total of female', value: '5395', w: 213, ml: 8 },
  { title: 'total of male', value: '6510', w: 191, ml: 6 },
  { title: 'total of name', value: '1701', w: 192, ml: 8 },
];
const tables = ['Country', 'Customers', 'Department', 'Employees', 'fill', 'MonyTransfere', 'Needs', 'Orders', 'Product'];

export default function App() {
  return (
    <Page>
      <GlobalStyle />
      <RibbonBar />
      <Body>
        <Rail>
          <svg width="32" height="24" viewBox="0 0 32 24" fill="none" stroke="#333" strokeWidth="1.3">
            <path d="M-1 22H15M1 10h3v10H1zM6 13h3v7H6zM11 4h3v16h-3z" />
          </svg>
          <svg width="32" height="22" viewBox="0 0 32 22" fill="none" stroke="#6e6e6e" strokeWidth="1.2">
            <path d="M-1 1h17v19H-1M-1 7h17M-1 14h17M5 1v19M11 1v19" />
          </svg>
          <svg width="32" height="24" viewBox="0 0 32 24" fill="none" stroke="#6e6e6e" strokeWidth="1.2">
            <path d="M-1 6h6v6H-1zM-1 15h6v5H-1zM9 1h9v6H9zM9 10h9v5H9zM9 18h9v5H9zM5 9h4M5 17h4" />
          </svg>
          <svg width="32" height="24" viewBox="0 0 32 24" fill="none" stroke="#777" strokeWidth="1.1">
            <path d="M1 21V2h8l4 4v13M9 2v4h4M14 10c2 3 2 8-1 11" />
            <text x="0" y="21" fontFamily={UI} fontSize="8" fontWeight="700" fill="#777" stroke="none">AX</text>
          </svg>
        </Rail>
        <WorkColumn>
          <WorkRow>
            <Canvas>
              <Frame>
                <SlicerRow>
                  {slicerCards.map(c => (
                    <SlicerCard key={c.w} $w={c.w} $ml={c.ml}>
                      {c.items.map(([t, w]) => <SlicerBtn key={t} $w={w}>{t}</SlicerBtn>)}
                    </SlicerCard>
                  ))}
                </SlicerRow>
                <KpiRow>
                  {kpis.map(k => (
                    <KpiCard key={k.title} $w={k.w} $ml={k.ml}>
                      <CardHead $h={33} $size={21.5}>{k.title}</CardHead>
                      <KpiValue>{k.value}</KpiValue>
                    </KpiCard>
                  ))}
                </KpiRow>
                <MainRow>
                  <LeftColumn>
                    <ChartCard $w={402} $h={284} $ml={6} $top>
                      <CardHead $h={33} $size={21.5}>Count of Name by House</CardHead>
                      <PieChart />
                    </ChartCard>
                    <ChartCard $w={407} $h={263} $ml={1} $mt={-5}>
                      <CardHead $h={30} $size={21.5}>Count of Name by Country</CardHead>
                      <BarChart />
                    </ChartCard>
                  </LeftColumn>
                  <MapFrame>
                    <MapTitle>Count of Name by Country</MapTitle>
                    <MapChart />
                  </MapFrame>
                </MainRow>
              </Frame>
            </Canvas>
            <FiltersPane>
              <ChevronsLeft size={30} strokeWidth={1} />
              <FilterGlyph>
                <svg width="16" height="16" viewBox="0 0 16 16" fill="none" stroke="#3b3a39" strokeWidth="1.2">
                  <path d="M15 1L1 8l14 7V1z" />
                </svg>
              </FilterGlyph>
              <FiltersText>Filters</FiltersText>
            </FiltersPane>
          </WorkRow>
          <TabStrip>
            <Tab $w={160} /><Tab $w={75} /><Tab $w={74} /><Tab $w={76} /><Tab $w={76} />
            <Tab $w={96} $plain /><Tab $w={49} $active />
          </TabStrip>
        </WorkColumn>
        <VizPane>
          <PaneTitle $pl={10}>Visualizations<ChevronsRight size={30} strokeWidth={1} /></PaneTitle>
          <BuildLabel>Build visual</BuildLabel>
          <BuildTabs>
            <BuildTab $on>
              <svg width="32" height="32" viewBox="0 0 32 32">
                <path d="M3 2h24" stroke="#3b3a39" strokeWidth="1" />
                <rect x="2" y="7" width="28" height="10" fill="#0f7b68" stroke="#333" strokeDasharray="1.5 1.5" />
                <rect x="2" y="20" width="28" height="10" fill="#0f7b68" stroke="#333" strokeDasharray="1.5 1.5" />
              </svg>
            </BuildTab>
            <BuildTab>
              <svg width="34" height="32" viewBox="0 0 34 32" fill="none" stroke="#3b3a39" strokeWidth="1.2">
                <path d="M6 30H3V2h13l8 8v4M16 2v8h8" />
                <path d="M16 24l12-10 3 2-9 11c-1 2-4 3-8 3 1-1 1-4 2-6z" />
              </svg>
            </BuildTab>
            <Notch />
          </BuildTabs>
          <IconGrid>
            {vizIcons.map((icon, i) => (
              <IconCell key={i}>
                <svg width="24" height="24" viewBox="0 0 24 24" overflow="visible">{icon}</svg>
              </IconCell>
            ))}
          </IconGrid>
          <More>...</More>
          <CopilotRow><CopilotDot /></CopilotRow>
          <FieldLabel $mt={12}>Values</FieldLabel>
          <DropBox $h={34} $mt={6} $pl={12}>Add data fields here</DropBox>
          <FieldLabel $mt={15} $strong>Drill through</FieldLabel>
          <ToggleRow $mt={11}>Cross-report<Toggle><span>Off</span><i /></Toggle></ToggleRow>
          <ToggleRow $mt={14}>Keep all filters<Toggle $on><span>On</span><i /></Toggle></ToggleRow>
          <DropBox $h={32} $mt={13} $pl={10}>Add drill-through fields here</DropBox>
        </VizPane>
        <DataPane>
          <PaneTitle $pl={12}>Data</PaneTitle>
          <SearchBox><Search size={18} strokeWidth={1.2} color="#3b3a39" />Search</SearchBox>
          <TableList>
            {tables.map(t => (
              <TableRow key={t}>
                <svg width="10" height="16" viewBox="0 0 10 16" fill="none" stroke="#3b3a39" strokeWidth="1">
                  <path d="M1.5 2l7 6-7 6" />
                </svg>
                <TableGlyph width="16" height="16" viewBox="0 0 16 16" fill="none" stroke="#3b3a39" strokeWidth="1.2">
                  <rect x="1" y="1" width="14" height="14" rx="2.5" />
                  <path d="M1 5.5h14M1 10.5h14M5.5 1v14M10.5 1v14" />
                </TableGlyph>
                <span>{t}</span>
              </TableRow>
            ))}
          </TableList>
        </DataPane>
      </Body>
      <Watermark>
        <WatermarkLogo lang="ar" dir="rtl">مستقل</WatermarkLogo>
        <WatermarkText>mostaql.com</WatermarkText>
      </Watermark>
    </Page>
  );
}
